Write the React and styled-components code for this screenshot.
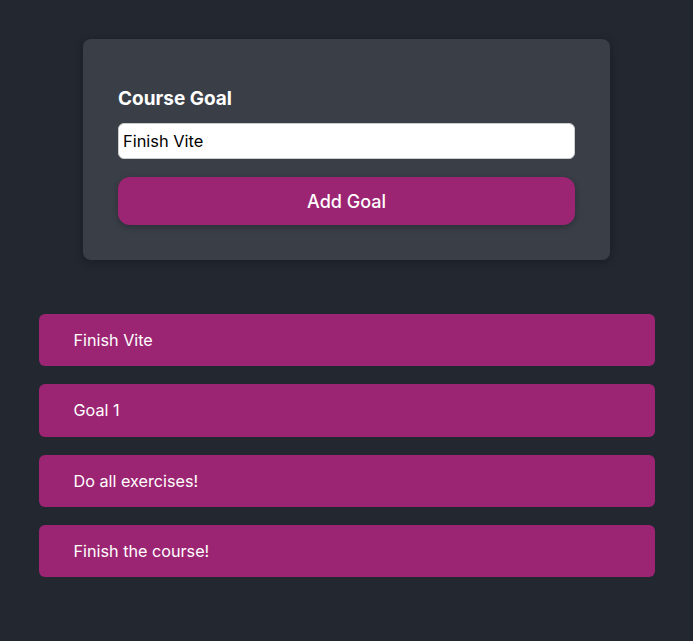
import React from "react";
import styled, { createGlobalStyle } from "styled-components";

const Global = createGlobalStyle`
  * { box-sizing: border-box; }
  html, body { margin: 0; padding: 0; background: #222730; }
  body { font-family: Inter, "Noto Sans", sans-serif; color: #fff; }
`;

const Page = styled.div`
  display: flex;
  flex-direction: column;
  align-items: center;
  padding-top: 39px;
  min-height: 641px;
`;

const Card = styled.form`
  width: 527px;
  background: #3a3e47;
  border-radius: 8px;
  padding: 48px 35px 35px;
  display: flex;
  flex-direction: column;
  box-shadow: 0 2px 8px rgba(0, 0, 0, 0.25);
`;

const Label = styled.label`
  font-weight: 700;
  font-size: 19px;
  line-height: 23px;
  color: #fff;
`;

const Input = styled.input`
  margin-top: 13px;
  height: 36px;
  width: 100%;
  border: 1px solid #ccc;
  border-radius: 6px;
  padding: 0 4px;
  font-family: Inter, "Noto Sans", sans-serif;
  font-size: 16.4px;
  color: #000;
  background: #fff;
  outline: none;
`;

const Button = styled.button`
  margin-top: 18px;
  height: 48px;
  border: none;
  border-radius: 12px;
  background: #9c2573;
  color: #fff;
  font-family: Inter, "Noto Sans", sans-serif;
  font-size: 18px;
  font-weight: 500;
  box-shadow: 0 2px 6px rgba(0, 0, 0, 0.25);
  cursor: pointer;
`;

const List = styled.ul`
  list-style: none;
  margin: 54px 0 0;
  padding: 0;
  width: 616px;
  display: flex;
  flex-direction: column;
  gap: 18px;
`;

const Item = styled.li`
  height: 52.33px;
  display: flex;
  align-items: center;
  padding: 0 35px;
  background: #9c2573;
  border-radius: 6px;
  font-size: 16.2px;
  color: #fff;
`;

const goals = ["Finish Vite", "Goal 1", "Do all exercises!", "Finish the course!"];

export default function App() {
  return (
    <>
      <Global />
      <Page>
        <Card onSubmit={(e) => e.preventDefault()}>
          <Label htmlFor="goal">Course Goal</Label>
          <Input id="goal" defaultValue="Finish Vite" />
          <Button type="submit">Add Goal</Button>
        </Card>
        <List>
          {goals.map((g) => (
            <Item key={g}>{g}</Item>
          ))}
        </List>
      </Page>
    </>
  );
}
